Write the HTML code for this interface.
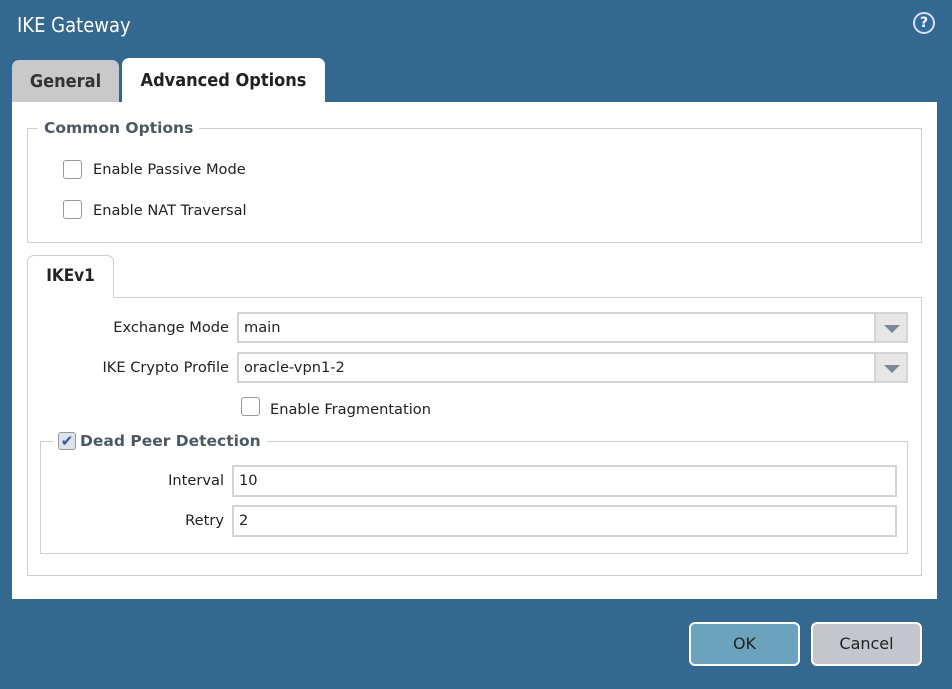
<!DOCTYPE html>
<html><head><style>
*{box-sizing:border-box;margin:0;padding:0}
body{width:952px;height:689px;background:#336890;font-family:"DejaVu Sans","Liberation Sans",sans-serif;font-size:14.6px;color:#222;position:relative;overflow:hidden}
.a{position:absolute}
.title{left:17px;top:13px;color:#fff;font-size:20px;font-family:"DejaVu Sans Condensed","Liberation Sans Narrow",sans-serif}
.help{left:913px;top:12px;width:22px;height:22px;border-radius:50%;background:#2f6ea0;border:2px solid #dde;color:#fff;font-weight:bold;font-size:14px;text-align:center;line-height:18px}
.tab{border-radius:7px 7px 0 0;font-weight:bold;font-size:18px;text-align:center;font-family:"DejaVu Sans Condensed",sans-serif}
.panel{left:12px;top:102px;width:925px;height:497px;background:#fff}
.fs{border:1px solid #cfcfcf}
.leg{background:#fff;font-weight:bold;color:#4a5966;font-size:16px;padding:0 6px;font-family:"DejaVu Sans",sans-serif;font-size:15.5px}
.cb{width:19px;height:19px;border:1px solid #9a9a9a;border-radius:3px;background:#fff}
.inp{border:2px solid #d4d4d4;background:#fff;padding-left:5px;line-height:28px}
.arr{border-left:2px solid #d4d4d4;background:#e6e6e6;width:32px;height:100%;position:absolute;right:0;top:0}
.arr:after{content:"";position:absolute;left:8px;top:11px;border-left:8px solid transparent;border-right:8px solid transparent;border-top:8px solid #7c8792}
.lbl{text-align:right}
.btn{width:111px;height:44px;border:2px solid #fff;border-radius:6px;text-align:center;line-height:40px;font-size:16px;color:#222}
</style></head><body>
<div class="a title">IKE Gateway</div>
<div class="a help">?</div>
<div class="a tab" style="left:12px;top:60px;width:107px;height:42px;background:#c9c9c9;line-height:44px;color:#333">General</div>
<div class="a tab" style="left:122px;top:58px;width:203px;height:46px;background:#fff;line-height:46px;color:#222">Advanced Options</div>
<div class="a panel"></div>
<div class="a fs" style="left:27px;top:128px;width:895px;height:115px"></div>
<div class="a leg" style="left:38px;top:119px">Common Options</div>
<div class="a cb" style="left:63px;top:160px"></div>
<div class="a" style="left:93px;top:161px">Enable Passive Mode</div>
<div class="a cb" style="left:63px;top:200px"></div>
<div class="a" style="left:93px;top:202px">Enable NAT Traversal</div>
<div class="a fs" style="left:27px;top:297px;width:895px;height:279px"></div>
<div class="a tab fs" style="left:27px;top:255px;width:87px;height:43px;border-bottom:none;background:#fff;font-size:17px;line-height:40px;color:#222">IKEv1</div>
<div class="a lbl" style="left:30px;top:319px;width:199px">Exchange Mode</div>
<div class="a inp" style="left:237px;top:312px;width:671px;height:31px">main<div class="arr"></div></div>
<div class="a lbl" style="left:30px;top:359px;width:199px">IKE Crypto Profile</div>
<div class="a inp" style="left:237px;top:352px;width:671px;height:31px">oracle-vpn1-2<div class="arr"></div></div>
<div class="a cb" style="left:241px;top:397px"></div>
<div class="a" style="left:270px;top:401px">Enable Fragmentation</div>
<div class="a fs" style="left:40px;top:441px;width:868px;height:113px"></div>
<div class="a leg" style="left:54px;top:432px;padding-left:4px;display:flex;align-items:center"><span class="cb" style="display:inline-block;width:18px;height:18px;background:#dde3ea;color:#2d5d9a;font-size:15px;line-height:16px;text-align:center;margin-right:4px">✔</span>Dead Peer Detection</div>
<div class="a lbl" style="left:80px;top:472px;width:144px">Interval</div>
<div class="a inp" style="left:232px;top:465px;width:665px;height:32px">10</div>
<div class="a lbl" style="left:80px;top:512px;width:144px">Retry</div>
<div class="a inp" style="left:232px;top:505px;width:665px;height:32px">2</div>
<div class="a btn" style="left:689px;top:622px;background:#6aa3bb">OK</div>
<div class="a btn" style="left:811px;top:622px;background:#c4c6cc">Cancel</div>
</body></html>
